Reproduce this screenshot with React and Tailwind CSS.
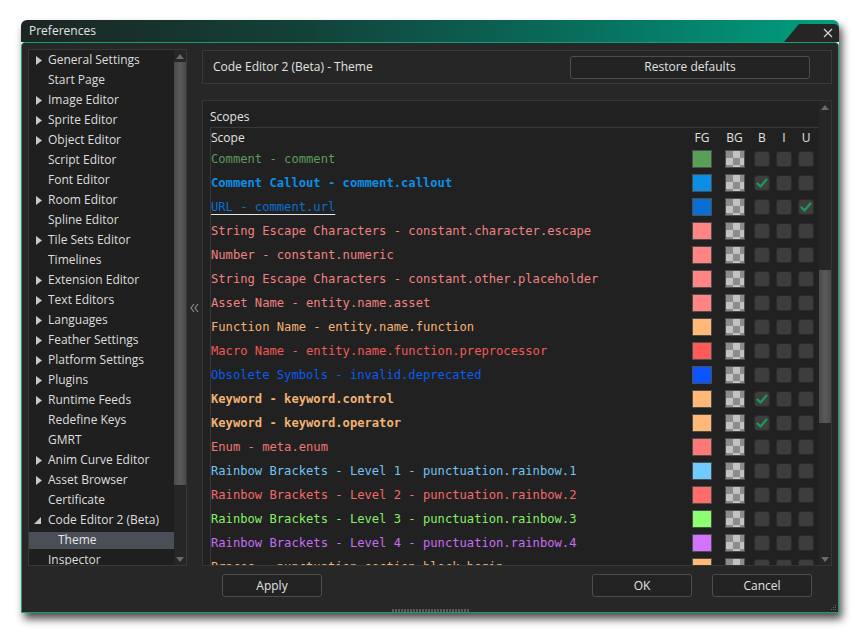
import React from "react";

const ui = "font-['Open_Sans','Noto_Sans',sans-serif]";
const mono = "font-['DejaVu_Sans_Mono','Liberation_Mono',monospace]";

const treeItems = [
    { label: "General Settings", arrow: "right" },
    { label: "Start Page" },
    { label: "Image Editor", arrow: "right" },
    { label: "Sprite Editor", arrow: "right" },
    { label: "Object Editor", arrow: "right" },
    { label: "Script Editor" },
    { label: "Font Editor" },
    { label: "Room Editor", arrow: "right" },
    { label: "Spline Editor" },
    { label: "Tile Sets Editor", arrow: "right" },
    { label: "Timelines" },
    { label: "Extension Editor", arrow: "right" },
    { label: "Text Editors", arrow: "right" },
    { label: "Languages", arrow: "right" },
    { label: "Feather Settings", arrow: "right" },
    { label: "Platform Settings", arrow: "right" },
    { label: "Plugins", arrow: "right" },
    { label: "Runtime Feeds", arrow: "right" },
    { label: "Redefine Keys" },
    { label: "GMRT" },
    { label: "Anim Curve Editor", arrow: "right" },
    { label: "Asset Browser", arrow: "right" },
    { label: "Certificate" },
    { label: "Code Editor 2 (Beta)", arrow: "open" },
    { label: "Theme", child: true, selected: true },
    { label: "Inspector" },
];

const scopes = [
    { text: "Comment - comment", color: "text-[#5c9c5c]", swatch: "bg-[#58a058]" },
    { text: "Comment Callout - comment.callout", color: "text-[#0b8fe6]", swatch: "bg-[#0b8fe6]", bold: true, checks: [1, 0, 0] },
    { text: "URL - comment.url", color: "text-[#0a6fd4]", swatch: "bg-[#0a6fd4]", underline: true, checks: [0, 0, 1] },
    { text: "String Escape Characters - constant.character.escape", color: "text-[#f08282]", swatch: "bg-[#ff8484]" },
    { text: "Number - constant.numeric", color: "text-[#f08282]", swatch: "bg-[#ff8484]" },
    { text: "String Escape Characters - constant.other.placeholder", color: "text-[#f08282]", swatch: "bg-[#ff8484]" },
    { text: "Asset Name - entity.name.asset", color: "text-[#f08282]", swatch: "bg-[#ff8484]" },
    { text: "Function Name - entity.name.function", color: "text-[#f2b272]", swatch: "bg-[#ffb878]" },
    { text: "Macro Name - entity.name.function.preprocessor", color: "text-[#f25858]", swatch: "bg-[#ff5a5a]" },
    { text: "Obsolete Symbols - invalid.deprecated", color: "text-[#0a5cf2]", swatch: "bg-[#0a55ff]" },
    { text: "Keyword - keyword.control", color: "text-[#f2b272]", swatch: "bg-[#ffb878]", bold: true, checks: [1, 0, 0] },
    { text: "Keyword - keyword.operator", color: "text-[#f2b272]", swatch: "bg-[#ffb878]", bold: true, checks: [1, 0, 0] },
    { text: "Enum - meta.enum", color: "text-[#ee7676]", swatch: "bg-[#ff7878]" },
    { text: "Rainbow Brackets - Level 1 - punctuation.rainbow.1", color: "text-[#72c4f2]", swatch: "bg-[#70ccff]" },
    { text: "Rainbow Brackets - Level 2 - punctuation.rainbow.2", color: "text-[#f26a6a]", swatch: "bg-[#ff6c6c]" },
    { text: "Rainbow Brackets - Level 3 - punctuation.rainbow.3", color: "text-[#88ee68]", swatch: "bg-[#8cff70]" },
    { text: "Rainbow Brackets - Level 4 - punctuation.rainbow.4", color: "text-[#c86cf2]", swatch: "bg-[#d272ff]" },
    { text: "Braces - punctuation.section.block.begin", color: "text-[#f2b272]", swatch: "bg-[#ffb878]" },
];

const Arrow = ({ type }) => {
    if (type === "right") {
        return (
            <svg width="6" height="9" viewBox="0 0 6 9">
                <polygon points="0,0 6,4.5 0,9" fill="#c8c8c8" />
            </svg>
        );
    }
    if (type === "open") {
        return (
            <svg width="7" height="7" viewBox="0 0 7 7" className="-ml-[2px]">
                <polygon points="7,0 7,7 0,7" fill="#c8c8c8" />
            </svg>
        );
    }
    return null;
};

const Tri = ({ up }) => (
    <svg width="8" height="5" viewBox="0 0 8 5">
        <polygon points={up ? "0,5 4,0 8,5" : "0,0 8,0 4,5"} fill="#6a6a6a" />
    </svg>
);

const CheckBox = ({ checked }) => (
    <div className="w-[16px] h-[16px] rounded-[3px] bg-[#3d3d3d] border border-[#2a2a2a] flex items-center justify-center">
        {checked ? (
            <svg width="12" height="10" viewBox="0 0 12 10">
                <path d="M1.5 5.5 L4.5 8.5 L10.5 1.5" fill="none" stroke="#1c9a5c" strokeWidth="2.2" strokeLinecap="round" strokeLinejoin="round" />
            </svg>
        ) : null}
    </div>
);

const Button = ({ children, className = "" }) => (
    <button className={`h-[23px] rounded-[3px] bg-[#232323] border border-[#4d4d4d] text-[12px] text-[#e2e2e2] ${className}`}>
        {children}
    </button>
);

export default function App() {
    return (
        <div className={`w-[860px] h-[634px] bg-white overflow-hidden ${ui}`}>
            <div className="ml-[21px] mt-[20px] w-[818px] h-[593px] flex flex-col rounded-t-[6px] shadow-[3px_6px_8px_rgba(0,0,0,0.7)]">
                {/* Title bar */}
                <div className="h-[22px] flex items-end rounded-t-[6px] bg-[linear-gradient(90deg,#1c2523_0%,#12423a_35%,#08705f_70%,#00a081_100%)]">
                    <div className="flex-1 h-full flex items-center pl-[8px] text-[12px] text-[#e4e4e4]">Preferences</div>
                    <div className="w-[55px] h-[18px] bg-[#252525] rounded-tr-[5px] [clip-path:polygon(15px_0,100%_0,100%_100%,0_100%)] flex items-center justify-end pr-[6px]">
                        <svg width="10" height="10" viewBox="0 0 10 10">
                            <path d="M1 1 L9 9 M9 1 L1 9" stroke="#cfcfcf" strokeWidth="1.3" />
                        </svg>
                    </div>
                </div>

                {/* Body */}
                <div className="relative flex-1 flex flex-col bg-[#272727] border border-[#14a070] rounded-t-[4px] px-[6px] pt-[6px]">
                    <div className="h-[517px] flex">
                        {/* Sidebar tree */}
                        <div className="w-[159px] h-full flex border border-[#383838] bg-[#1f1f1f]">
                            <div className="flex-1 overflow-hidden">
                                {treeItems.map((item) => (
                                    <div key={item.label} className="h-[20px] flex items-center">
                                        {item.selected ? (
                                            <div className="w-full h-[17px] bg-[#4a4e56] flex items-center pl-[29px] text-[12px] text-[#e6e6e6]">
                                                {item.label}
                                            </div>
                                        ) : (
                                            <>
                                                <div className="w-[19px] pl-[7px] flex items-center">
                                                    <Arrow type={item.arrow} />
                                                </div>
                                                <span className="text-[12px] text-[#dedede] whitespace-nowrap">{item.label}</span>
                                            </>
                                        )}
                                    </div>
                                ))}
                            </div>
                            <div className="w-[12px] flex flex-col bg-[#262626]">
                                <div className="h-[12px] flex items-center justify-center">
                                    <Tri up />
                                </div>
                                <div className="flex-1">
                                    <div className="h-[423px] bg-[linear-gradient(90deg,#4a4a4a,#5a5a5a,#4a4a4a)]" />
                                </div>
                                <div className="h-[12px] flex items-center justify-center">
                                    <Tri />
                                </div>
                            </div>
                        </div>

                        {/* Collapse handle */}
                        <div className="w-[15px] flex items-center justify-center">
                            <svg width="9" height="10" viewBox="0 0 9 10">
                                <path d="M4 1 L1 5 L4 9 M8 1 L5 5 L8 9" fill="none" stroke="#8a8a8a" strokeWidth="1.2" />
                            </svg>
                        </div>

                        {/* Right column */}
                        <div className="flex-1 flex flex-col pt-[1px]">
                            <div className="h-[34px] flex items-center justify-between border border-[#3a3a3a] bg-[#262626] pl-[10px] pr-[21px]">
                                <span className="text-[12px] text-[#e2e2e2]">Code Editor 2 (Beta) - Theme</span>
                                <Button className="w-[240px]">Restore defaults</Button>
                            </div>

                            <div className="mt-[16px] h-[466px] flex border border-[#363636] bg-[#212121]">
                                <div className="flex-1 flex flex-col overflow-hidden">
                                    <div className="h-[26px] flex items-end pb-[2px] pl-[7px] text-[12px] leading-[16px] text-[#e2e2e2]">
                                        Scopes
                                    </div>
                                    <div className="ml-[7px] flex-1 border-l border-t border-[#383838] overflow-hidden">
                                        <div className="h-[19px] flex items-center text-[12px] text-[#e2e2e2]">
                                            <span className="flex-1">Scope</span>
                                            <span className="w-[32px] text-center">FG</span>
                                            <span className="w-[33px] text-center">BG</span>
                                            <span className="w-[22px] text-center">B</span>
                                            <span className="w-[22px] text-center">I</span>
                                            <span className="w-[22px] text-center">U</span>
                                            <span className="w-[2px]" />
                                        </div>
                                        {scopes.map((row, i) => {
                                            const checks = row.checks || [0, 0, 0];
                                            return (
                                                <div key={i} className="h-[24px] flex items-center">
                                                    <span
                                                        className={`flex-1 whitespace-nowrap text-[12.15px] ${mono} ${row.color} ${row.bold ? "font-bold" : ""} ${row.underline ? "underline decoration-[#e6e6e6] underline-offset-[3px]" : ""}`}
                                                    >
                                                        {row.text}
                                                    </span>
                                                    <div className="w-[32px] flex justify-center">
                                                        <div className={`w-[20px] h-[18px] border border-[#4e4e4e] ${row.swatch}`} />
                                                    </div>
                                                    <div className="w-[33px] flex justify-center">
                                                        <div className="w-[20px] h-[18px] border border-[#4e4e4e] bg-[conic-gradient(#c2c2c2_25%,#8c8c8c_0_50%,#c2c2c2_0_75%,#8c8c8c_0)] bg-[length:14px_14px]" />
                                                    </div>
                                                    {checks.map((c, j) => (
                                                        <div key={j} className="w-[22px] flex justify-center">
                                                            <CheckBox checked={!!c} />
                                                        </div>
                                                    ))}
                                                    <span className="w-[2px]" />
                                                </div>
                                            );
                                        })}
                                    </div>
                                </div>
                                <div className="w-[12px] flex flex-col bg-[#262626]">
                                    <div className="h-[12px] flex items-center justify-center">
                                        <Tri up />
                                    </div>
                                    <div className="flex-1">
                                        <div className="mt-[157px] h-[153px] bg-[linear-gradient(90deg,#4a4a4a,#5a5a5a,#4a4a4a)]" />
                                    </div>
                                    <div className="h-[12px] flex items-center justify-center">
                                        <Tri />
                                    </div>
                                </div>
                            </div>
                        </div>
                    </div>

                    {/* Bottom buttons */}
                    <div className="pt-[8px] flex pl-[194px] pr-[20px]">
                        <Button className="w-[100px]">Apply</Button>
                        <div className="flex-1" />
                        <Button className="w-[100px]">OK</Button>
                        <Button className="w-[100px] ml-[20px]">Cancel</Button>
                    </div>
                    <div className="mt-[12px] mx-auto w-[77px] h-[3px] bg-[repeating-linear-gradient(90deg,#5a5a5a_0_2px,transparent_2px_3px)]" />

                    {/* Resize grip */}
                    <svg width="6" height="6" viewBox="0 0 6 6" className="absolute right-[1px] bottom-[1px]">
                        <rect x="4" y="0" width="1" height="1" fill="#6a6a6a" />
                        <rect x="2" y="2" width="1" height="1" fill="#6a6a6a" />
                        <rect x="4" y="2" width="1" height="1" fill="#6a6a6a" />
                        <rect x="0" y="4" width="1" height="1" fill="#6a6a6a" />
                        <rect x="2" y="4" width="1" height="1" fill="#6a6a6a" />
                        <rect x="4" y="4" width="1" height="1" fill="#6a6a6a" />
                    </svg>
                </div>
            </div>
        </div>
    );
}
